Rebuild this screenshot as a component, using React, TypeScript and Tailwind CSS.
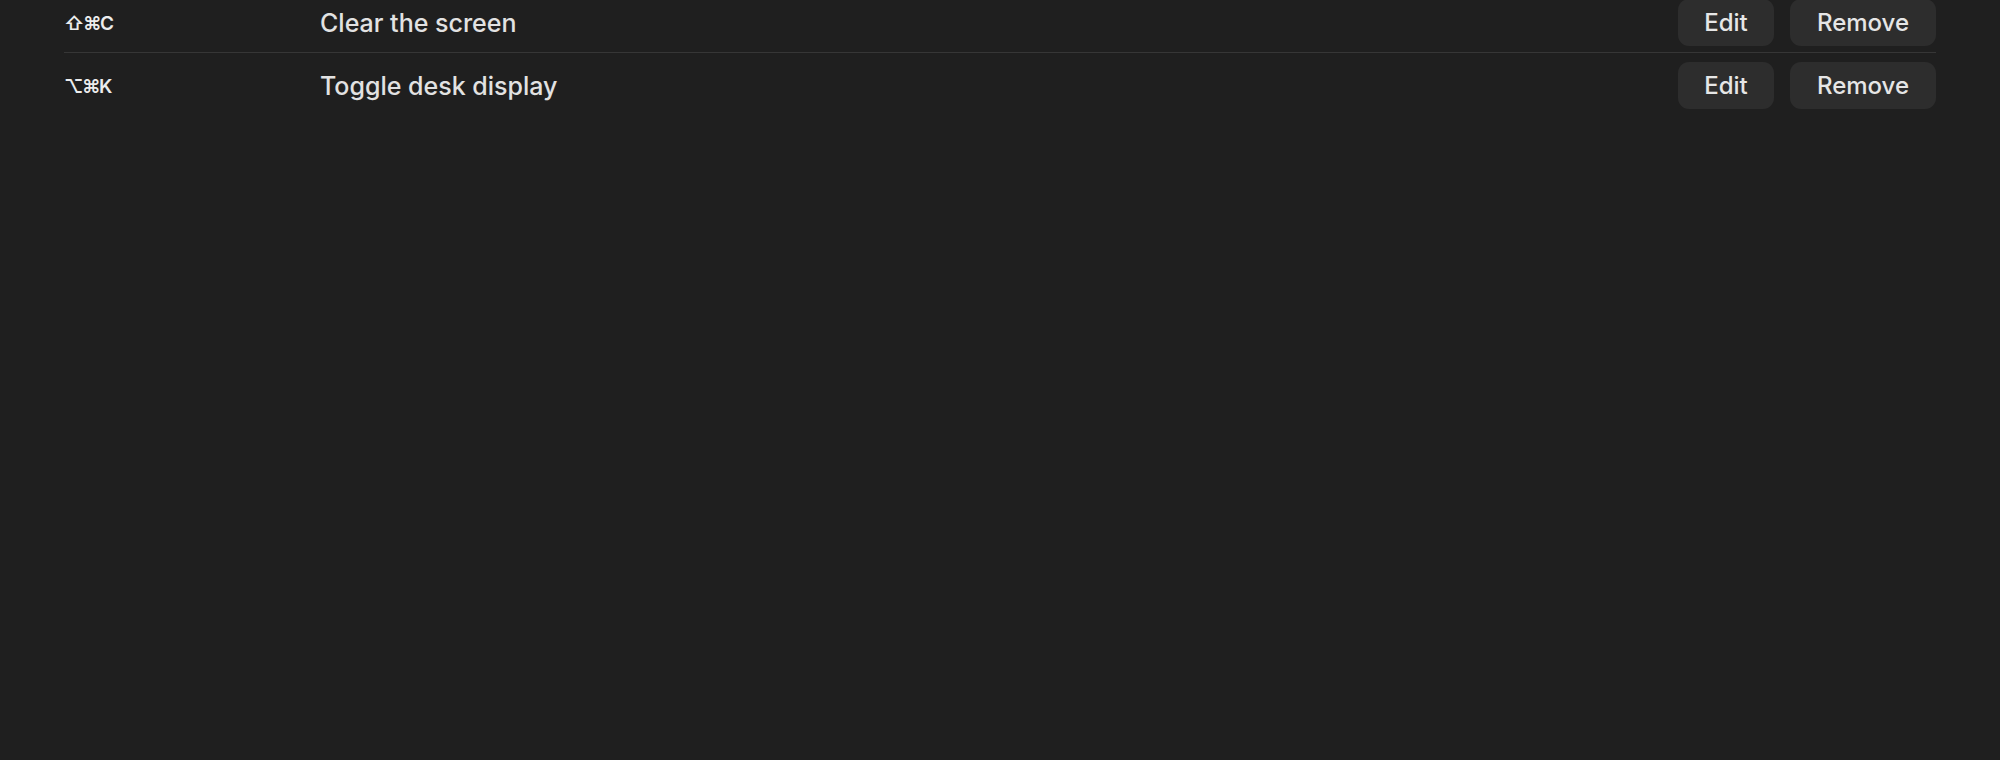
const shortcuts = [
  { keys: '⇧⌘C', label: 'Clear the screen' },
  { keys: '⌥⌘K', label: 'Toggle desk display' },
];

function ShortcutRow({ keys, label, last }: { keys: string; label: string; last: boolean }) {
  return (
    <div className={`flex items-center pt-[9px] pb-[6px] ${last ? '' : 'border-b border-[#363636]'}`}>
      <div className="w-[256px] shrink-0 pt-[4px] text-[19px] font-semibold text-[#ececec] tracking-[-1.5px]">
        {keys}
      </div>
      <div className="flex-1 pt-[3px] text-[25px] font-medium text-[#e2e2e2]">{label}</div>
      <div className="flex items-center gap-4">
        <button className="h-[47px] w-[96px] rounded-[11px] bg-[#2d2d2d] text-[24px] font-medium text-[#e6e6e6]">
          Edit
        </button>
        <button className="h-[47px] w-[146px] rounded-[11px] bg-[#2d2d2d] text-[24px] font-medium text-[#e6e6e6]">
          Remove
        </button>
      </div>
    </div>
  );
}

export default function App() {
  return (
    <div
      className="h-[760px] w-full overflow-hidden bg-[#1f1f1f]"
      style={{ fontFamily: 'Inter, "Noto Sans", "DejaVu Sans", sans-serif' }}
    >
      <div className="-mt-[10px] px-16">
        {shortcuts.map((s, i) => (
          <ShortcutRow key={s.keys} keys={s.keys} label={s.label} last={i === shortcuts.length - 1} />
        ))}
      </div>
    </div>
  );
}
